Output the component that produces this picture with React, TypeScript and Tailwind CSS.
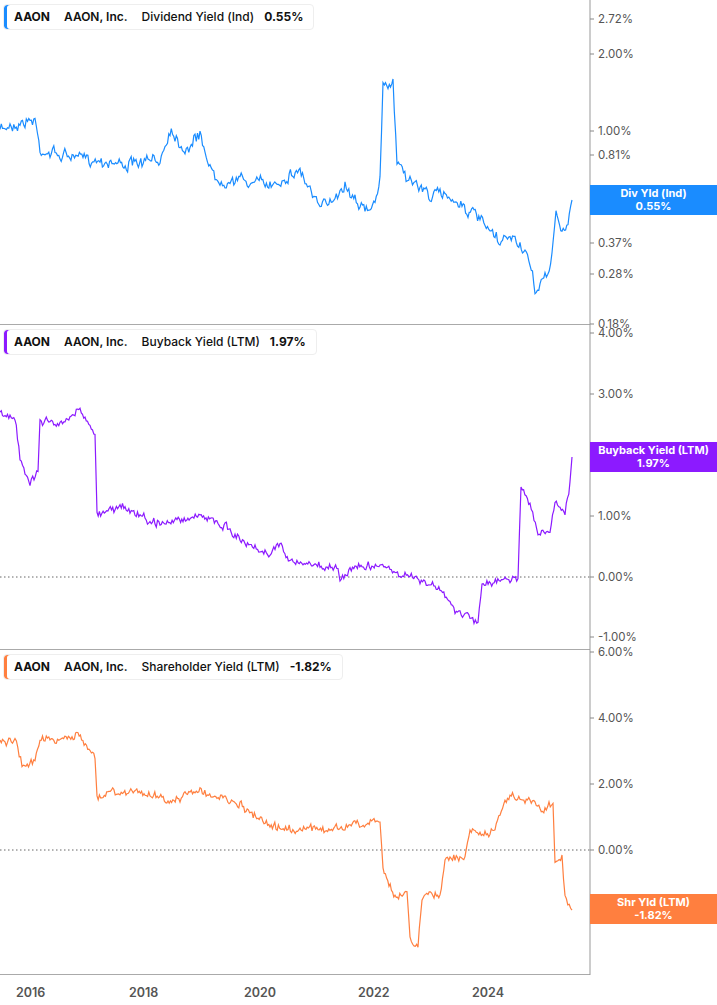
import React from "react";

type P = [number, number];
function rng(seed: number) {
  let s = seed;
  return () => {
    s = (s * 16807) % 2147483647;
    return s / 2147483647;
  };
}
function build(pts: P[], seed: number, amp: number): string {
  const r = rng(seed);
  const out: string[] = [];
  let w = 0;
  for (let i = 0; i < pts.length - 1; i++) {
    const [x0, y0] = pts[i];
    const [x1, y1] = pts[i + 1];
    const dx = x1 - x0;
    if (dx < 2) {
      out.push(`${x0},${y0}`, `${x1},${y1}`);
      continue;
    }
    const n = Math.floor(dx / 1.2);
    for (let k = 0; k < n; k++) {
      const t = k / n;
      w = w * 0.6 + (r() - 0.5) * amp;
      const y = y0 + (y1 - y0) * t + w + (r() - 0.5) * amp;
      out.push(`${(x0 + dx * t).toFixed(1)},${y.toFixed(1)}`);
    }
  }
  const l = pts[pts.length - 1];
  out.push(`${l[0]},${l[1]}`);
  return "M" + out.join(" L");
}

const top: P[] = [[0,130],[10,125],[35,120],[40,150],[60,155],[100,160],[130,165],[160,160],[170,128],[185,150],[200,135],[215,180],[240,180],[270,185],[300,170],[320,210],[345,185],[370,215],[380,180],[383,90],[393,82],[397,160],[410,180],[430,195],[450,195],[480,220],[500,245],[510,235],[525,250],[535,290],[545,280],[552,255],[556,210],[562,235],[568,225],[572,200]];
const mid: P[] = ([[0,415],[15,420],[20,460],[30,480],[38,470],[40,418],[55,425],[80,410],[95,435],[97,515],[120,505],[140,515],[160,525],[200,515],[230,530],[250,545],[270,555],[280,542],[292,562],[320,567],[338,567],[340,580],[355,565],[385,565],[400,575],[420,580],[440,590],[455,610],[470,618],[478,622],[482,585],[510,577],[518,577],[521,488],[530,500],[538,535],[550,530],[555,505],[565,515],[570,485],[572,457]] as P[]).map(([x,y]) => [x, y-325] as P);
const bot: P[] = ([[0,745],[15,740],[22,765],[35,760],[40,738],[60,740],[78,735],[95,755],[97,795],[120,790],[150,795],[180,800],[200,790],[240,805],[270,825],[300,830],[330,830],[350,825],[380,822],[383,870],[395,895],[407,888],[410,940],[418,945],[422,898],[440,895],[445,860],[465,858],[470,830],[490,835],[510,795],[530,800],[545,810],[553,803],[555,858],[562,858],[565,895],[572,910]] as P[]).map(([x,y]) => [x, y-650] as P);

type Tick = [string, number];

function Panel(props: {
  name: string; value: string; color: string; pts: P[]; seed: number; amp: number;
  ticks: Tick[]; tag: [string, string]; tagY: number; zeroY?: number;
}) {
  const { name, value, color, pts, seed, amp, ticks, tag, tagY, zeroY } = props;
  return (
    <div className="relative h-[325px] border-b border-[#aaa] w-[590px]">
      <svg className="absolute left-0 top-0 overflow-visible" width={717} height={325}>
        {zeroY !== undefined && (
          <line x1={0} x2={590} y1={zeroY} y2={zeroY} stroke="#666" strokeDasharray="1.5 2.5" />
        )}
        <line x1={590} x2={590} y1={0} y2={325} stroke="#999" />
        {ticks.map(([t, y]) => (
          <g key={t}>
            <line x1={590} x2={594} y1={y} y2={y} stroke="#888" />
            <text x={598} y={y + 4} fontSize={11.5} fill="#555" fontFamily="Inter, sans-serif">{t}</text>
          </g>
        ))}
        <path d={build(pts, seed, amp)} fill="none" stroke={color} strokeWidth={1.2} />
      </svg>
      <div className="absolute left-[3px] top-[4px] flex items-center gap-[14px] bg-white border border-[#eee] rounded pl-[10px] pr-[10px] h-[26px] text-[12px] text-[#111] font-[Inter,sans-serif]" style={{ boxShadow: `inset 3px 0 0 ${color}` }}>
        <span className="font-bold">AAON</span>
        <span className="font-semibold">AAON, Inc.</span>
        <span className="font-medium -mr-[4px]">{name}</span>
        <span className="font-bold">{value}</span>
      </div>
      <div className="absolute left-[590px] w-[127px] h-[30px] flex flex-col items-center justify-center text-white text-[11px] font-bold leading-[13px] font-[Inter,sans-serif]" style={{ top: tagY, background: color }}>
        <span>{tag[0]}</span>
        <span>{tag[1]}</span>
      </div>
    </div>
  );
}

export default function App() {
  return (
    <div className="w-[717px] h-[1005px] bg-white relative overflow-hidden font-[Inter,sans-serif]">
      <Panel name="Dividend Yield (Ind)" value="0.55%" color="#1a8cff" pts={top} seed={7} amp={7}
        ticks={[["2.72%",19],["2.00%",54],["1.00%",131],["0.81%",155],["0.37%",243],["0.28%",274],["0.18%",324]]}
        tag={["Div Yld (Ind)","0.55%"]} tagY={185} />
      <Panel name="Buyback Yield (LTM)" value="1.97%" color="#8c1aff" pts={mid} seed={11} amp={5}
        ticks={[["4.00%",8],["3.00%",69],["1.00%",191],["0.00%",252],["-1.00%",312]]}
        tag={["Buyback Yield (LTM)","1.97%"]} tagY={117} zeroY={252} />
      <Panel name="Shareholder Yield (LTM)" value="-1.82%" color="#ff7f3f" pts={bot} seed={23} amp={5}
        ticks={[["6.00%",2],["4.00%",68],["2.00%",134],["0.00%",200],["-2.00%",265]]}
        tag={["Shr Yld (LTM)","-1.82%"]} tagY={244} zeroY={200} />
      <div className="relative w-[590px] h-[30px] text-[12.5px] font-semibold text-[#555]">
        {[["2016",32],["2018",145],["2020",260],["2022",374],["2024",488]].map(([t, x]) => (
          <span key={t as string} className="absolute top-[9px]" style={{ left: (x as number) - 16 }}>{t}</span>
        ))}
      </div>
    </div>
  );
}
